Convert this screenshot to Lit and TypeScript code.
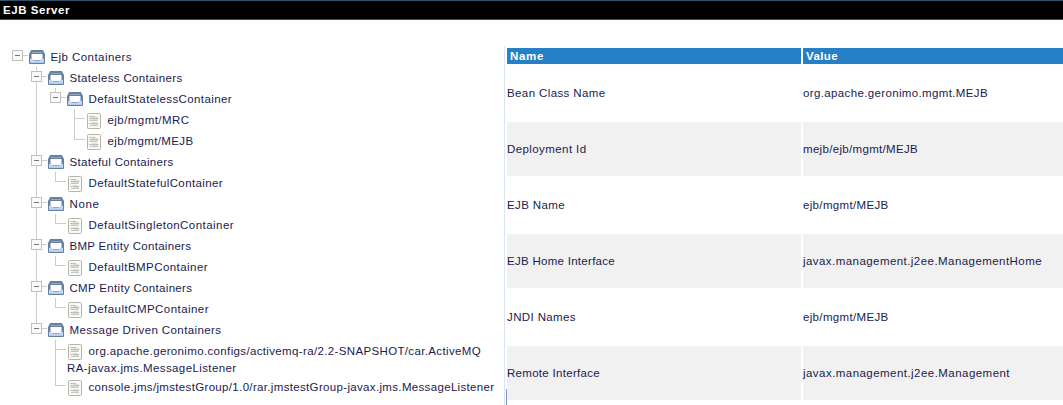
import { LitElement, html, svg, css, nothing } from "lit";
import { customElement, property } from "lit/decorators.js";

type Kind = "folder" | "leaf";
interface Line { text: string; width: number }
interface TreeRow {
  kind: Kind;
  level: number;
  lines: Line[];
  // one entry per ancestor column: does a guide line pass through it
  guides: boolean[];
  // the connector continues below / starts above this row
  down: boolean;
  up: boolean;
}

const row = (kind: Kind, level: number, guides: number[], up: number, down: number, ...lines: [string, number][]): TreeRow => ({
  kind, level, guides: guides.map(Boolean), up: !!up, down: !!down,
  lines: lines.map(([text, width]) => ({ text, width })),
});

const TREE: TreeRow[] = [
  row("folder", 0, [], 0, 0, ["Ejb Containers", 81.5]),
  row("folder", 1, [0], 1, 1, ["Stateless Containers", 113]),
  row("folder", 2, [0, 1], 1, 0, ["DefaultStatelessContainer", 143.5]),
  row("leaf", 3, [0, 1, 0], 1, 1, ["ejb/mgmt/MRC", 82]),
  row("leaf", 3, [0, 1, 0], 1, 0, ["ejb/mgmt/MEJB", 86]),
  row("folder", 1, [0], 1, 1, ["Stateful Containers", 104]),
  row("leaf", 2, [0, 1], 1, 0, ["DefaultStatefulContainer", 134.5]),
  row("folder", 1, [0], 1, 1, ["None", 30]),
  row("leaf", 2, [0, 1], 1, 0, ["DefaultSingletonContainer", 145.5]),
  row("folder", 1, [0], 1, 1, ["BMP Entity Containers", 122]),
  row("leaf", 2, [0, 1], 1, 0, ["DefaultBMPContainer", 119.5]),
  row("folder", 1, [0], 1, 1, ["CMP Entity Containers", 123]),
  row("leaf", 2, [0, 1], 1, 0, ["DefaultCMPContainer", 120.5]),
  row("folder", 1, [0], 1, 0, ["Message Driven Containers", 152]),
  row("leaf", 2, [0, 0], 1, 1,
    ["org.apache.geronimo.configs/activemq-ra/2.2-SNAPSHOT/car.ActiveMQ", 392.5],
    ["RA-javax.jms.MessageListener", 169.5]),
  row("leaf", 2, [0, 0], 1, 0, ["console.jms/jmstestGroup/1.0/rar.jmstestGroup-javax.jms.MessageListener", 406]),
];

const DETAILS: [string, number, string, number][] = [
  ["Bean Class Name", 98.5, "org.apache.geronimo.mgmt.MEJB", 185],
  ["Deployment Id", 79.5, "mejb/ejb/mgmt/MEJB", 115],
  ["EJB Name", 58, "ejb/mgmt/MEJB", 85.5],
  ["EJB Home Interface", 108, "javax.management.j2ee.ManagementHome", 239],
  ["JNDI Names", 69, "ejb/mgmt/MEJB", 85.5],
  ["Remote Interface", 93, "javax.management.j2ee.Management", 207],
];

const pen = document.createElement("canvas").getContext("2d")!;
const FAMILY = '"Liberation Sans", Arial, sans-serif';

@customElement("tracked-text")
class TrackedText extends LitElement {
  @property() text = "";
  @property({ type: Number }) width = 0;
  @property({ type: Boolean }) bold = false;
  static styles = css`
    :host { display: inline-block; white-space: pre; }
    .bold { font-weight: bold; }
  `;
  render() {
    pen.font = `${this.bold ? "bold " : ""}11.5px ${FAMILY}`;
    const spacing = (this.width - pen.measureText(this.text).width) / this.text.length;
    return html`<span class=${this.bold ? "bold" : "plain"} style="letter-spacing:${spacing.toFixed(3)}px">${this.text}</span>`;
  }
}

const label = (text: string, width: number, bold = false) =>
  html`<tracked-text .text=${text} .width=${width} .bold=${bold}></tracked-text>`;

const folderIcon = html`<svg class="icon" width="16" height="15" viewBox="0 0 16 15">
  <path d="M1.5 1.2Q1.7 0 2.8 0h10.4q1.1 0 1.3 1.2L16 4v9q0 1-1 1H1q-1 0-1-1V4Z" fill="#66809f"/>
  <path d="M3 2h10v1H3Z" fill="#93a9c1"/>
  <path d="M2.5 4h11v6h-11Z" fill="#fff"/>
  <path d="M1 8.7h2.6L5 10.6h6l1.4-1.9H15V13H1Z" fill="#c3d9f6"/>
  <path d="M5 10h6v.8H5Z" fill="#8fa7c3"/>
  <path d="M1 11.8h14V13H1Z" fill="#b0cbf0"/>
</svg>`;

const leafIcon = html`<svg class="icon" width="16" height="16" viewBox="0 0 16 16">
  <rect x="1.5" y=".5" width="13" height="15" rx="1" fill="#f9f9f6" stroke="#b5b5aa"/>
  <path d="M3.5 3.5h6M3.5 5.5h9M3.5 10.5h9" stroke="#a9a9a5" stroke-width=".9" stroke-dasharray="2.4 .5"/>
  <path d="M3.5 7.5h8M4 12.5h8" stroke="#c0c0bb" stroke-width=".9"/>
  <path d="M6 4.5h6M4 6.5h8M6 9.5h5M6 11.5h6" stroke="#d8d8d2" stroke-width=".8"/>
</svg>`;

@customElement("app-root")
class AppRoot extends LitElement {
  static styles = css`
    :host {
      display: block; width: 1063px; height: 405px; overflow: hidden; background: #fff;
      font: 11.5px/13px "Liberation Sans", Arial, sans-serif; color: #1b1b4d;
    }
    .title {
      box-sizing: border-box; height: 20px; padding: 3px 0 0 3px; background: #000; color: #fff;
      border-top: 1px solid #31526e; border-bottom: 1px solid #31526e;
    }
    .body { display: grid; grid-template-columns: 504px 1fr; height: 359px; margin-top: 26px; }
    .tree { padding-left: 10px; }
    .row { display: flex; height: 21px; }
    .row.tall { height: 36px; }
    .cell { flex: none; display: block; }
    .content { padding-top: 4px; line-height: 17px; white-space: nowrap; }
    .line { display: flex; height: 17px; }
    .line tracked-text { margin-top: -1px; }
    .icon { flex: none; display: block; margin-right: 5.5px; }
    .details { display: flex; border-left: 1px solid #d9e5f0; }
    .edge { width: 1px; height: 16px; margin: 343px 0 0 1px; background: #8496c0; }
    .table {
      flex: 1; display: grid; grid-template-columns: 294px 1fr; column-gap: 2px; row-gap: 2px;
      grid-template-rows: 16px repeat(6, 54px); padding-top: 2px;
    }
    .head { background: #2580c6; color: #fff; padding: 2px 0 0 3px; }
    .data { display: flex; align-items: center; }
    .shade { background: #f1f1f1; }
  `;

  connector(r: TreeRow, h: number) {
    const folder = r.kind === "folder";
    return html`<svg class="cell" width="19" height=${h} viewBox="0 0 19 ${h}" shape-rendering="crispEdges">
      <path d="${r.up ? "M7.5 0V10" : ""}${r.down ? `M7.5 9V${h}` : ""}M7 9.5H18" fill="none" stroke="#ccc"/>
      ${folder ? svg`<rect x="2.5" y="4.5" width="10" height="10" fill="#fafafa" stroke="#bfbfbf"/>
        <path d="M5 9.5h5" stroke="#777"/>` : nothing}
    </svg>`;
  }

  treeRow(r: TreeRow) {
    const tall = r.lines.length > 1;
    const h = tall ? 36 : 21;
    return html`<div class="row ${tall ? "tall" : ""}">
      ${r.guides.map((on) => html`<svg class="cell" width="19" height=${h} shape-rendering="crispEdges">
        ${on ? svg`<path d="M7.5 0V${h}" stroke="#ccc"/>` : nothing}</svg>`)}
      ${this.connector(r, h)}
      <div class="content">${r.lines.map((l, i) => html`<div class="line">
        ${i === 0 ? (r.kind === "folder" ? folderIcon : leafIcon) : nothing}${label(l.text, l.width)}
      </div>`)}</div>
    </div>`;
  }

  render() {
    return html`
      <div class="title">${label("EJB Server", 67, true)}</div>
      <div class="body">
        <div class="tree">${TREE.map((r) => this.treeRow(r))}</div>
        <div class="details">
          <div class="edge"></div>
          <div class="table">
            <div class="head">${label("Name", 34, true)}</div>
            <div class="head">${label("Value", 32, true)}</div>
            ${DETAILS.map(([n, nw, v, vw], i) => {
              const c = `data ${i % 2 ? "shade" : ""}`;
              return html`<div class=${c}>${label(n, nw)}</div><div class=${c}>${label(v, vw)}</div>`;
            })}
          </div>
        </div>
      </div>`;
  }
}
